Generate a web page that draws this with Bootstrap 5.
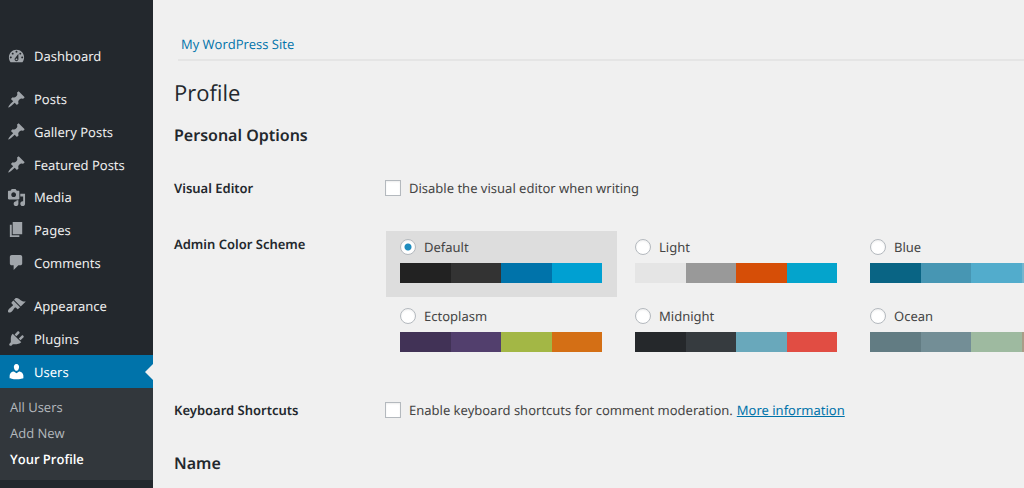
<!DOCTYPE html>
<html lang="en">
<head>
<meta charset="utf-8">
<meta name="viewport" content="width=device-width, initial-scale=1">
<title>Profile</title>
<link href="https://cdn.jsdelivr.net/npm/bootstrap@5.3.0/dist/css/bootstrap.min.css" rel="stylesheet">
<style>
body { font-family: "Noto Sans", "Open Sans", sans-serif; font-size: 13px; line-height: 20px; color: #444; background: #f0f0f0; overflow-x: hidden; text-rendering: geometricPrecision; }
a { color: #0073aa; }
/* Sidebar */
.sidebar { width: 153px; background: #23282d; padding-top: 39px; }
.menu-group { grid-auto-rows: 1fr; margin-bottom: 10px; }
.menu-one { height: 34px; }
.menu-three { height: 99px; }
.menu-six { height: 196px; }
.menu-link { color: #eee; padding-left: 7px; gap: 8px; }
.menu-link svg { width: 19px; height: 19px; fill: #a0a5aa; flex: none; }
.menu-link.current { background: #0073aa; color: #fff; }
.menu-link.current svg { fill: #fff; }
.menu-link.current::after { content: ""; margin-left: auto; border: 8px solid transparent; border-right-color: #f0f0f0; border-left: 0; }
.submenu { background: #32373c; padding: 6px 0 8px; font-family: "Open Sans", sans-serif; font-size: 13px; }
.submenu a { color: #b4b9be; line-height: 26px; padding-left: 10px; }
.submenu .current { color: #fff; font-weight: 600; }
/* Content */
.content { padding: 34px 0 0 21px; min-width: 0; }
.site-bar { margin-left: 4px; padding: 0 3px 5px; border-bottom: 2px solid #e5e5e5; font-family: "Open Sans", sans-serif; font-size: 13px; }
h1 { font-family: "Open Sans", sans-serif; font-size: 22px; line-height: 30px; font-weight: 400; color: #23282d; margin: 17px 0 0; }
h2 { font-size: 16px; line-height: 24px; font-weight: 600; color: #23282d; margin: 15px 0 0; }
.form-line + h2 { margin-top: 31px; }
.row-label { width: 211px; flex: none; font-weight: 600; color: #23282d; }
.form-line { margin-top: 31px; }
.scheme-line { margin: 33px 0 34px; }
.scheme-line .row-label { padding-top: 3px; }
.tick, .dot { appearance: none; width: 16px; height: 16px; flex: none; margin: 0; background: #fff; border: 1px solid #b4b9be; box-shadow: inset 0 1px 2px rgba(0,0,0,.07); }
.dot { border-radius: 50%; }
.dot:checked { background: radial-gradient(circle, #1e8cbe 3px, #fff 4px); }
.schemes { display: grid; grid-template-columns: repeat(3, 231px); gap: 3px 4px; padding-left: 1px; min-width: 0; overflow: hidden; }
.scheme { padding: 6px 15px 14px 14px; height: 66px; }
.scheme.selected { background: #ddd; }
.swatches { display: grid; grid-template-columns: repeat(4, 1fr); height: 20px; margin-top: 6px; }
</style>
</head>
<body>
<div class="d-flex min-vh-100">
<nav class="sidebar flex-shrink-0" aria-label="Main menu">
  <div class="menu-group menu-one d-grid">
    <a href="#" class="menu-link d-flex align-items-center text-decoration-none"><svg viewBox="0 0 20 20"><path fill-rule="evenodd" d="M3.76 16h12.48c1.1-1.37 1.76-3.11 1.76-5 0-4.42-3.58-8-8-8s-8 3.58-8 8c0 1.89.66 3.63 1.76 5zM10 4c.55 0 1 .45 1 1s-.45 1-1 1-1-.45-1-1 .45-1 1-1zM6 6c.55 0 1 .45 1 1s-.45 1-1 1-1-.45-1-1 .45-1 1-1zm8 0c.55 0 1 .45 1 1s-.45 1-1 1-1-.45-1-1 .45-1 1-1zm-5.37 5.55L12 7v6c0 1.1-.9 2-2 2s-2-.9-2-2c0-.57.24-1.08.63-1.45zM4 10c.55 0 1 .45 1 1s-.45 1-1 1-1-.45-1-1 .45-1 1-1zm12 0c.55 0 1 .45 1 1s-.45 1-1 1-1-.45-1-1 .45-1 1-1zm-5 3c0-.55-.45-1-1-1s-1 .45-1 1 .45 1 1 1 1-.45 1-1z"/></svg>Dashboard</a>
  </div>
  <div class="menu-group menu-six d-grid">
    <a href="#" class="menu-link d-flex align-items-center text-decoration-none"><svg viewBox="0 0 20 20"><path id="pin" d="M10.44 3.02l1.82-1.82 6.36 6.35-1.83 1.82c-1.05-.68-2.48-.57-3.41.36l-.75.75c-.92.93-1.04 2.35-.35 3.41l-1.83 1.82-2.41-2.41-2.8 2.79c-.42.42-3.38 2.71-3.8 2.29s1.86-3.39 2.28-3.81l2.79-2.79L4.1 9.36l1.83-1.82c1.05.69 2.48.57 3.4-.36l.75-.75c.93-.92 1.05-2.35.36-3.41z"/></svg>Posts</a>
    <a href="#" class="menu-link d-flex align-items-center text-decoration-none"><svg viewBox="0 0 20 20"><use href="#pin"/></svg>Gallery Posts</a>
    <a href="#" class="menu-link d-flex align-items-center text-decoration-none"><svg viewBox="0 0 20 20"><use href="#pin"/></svg>Featured Posts</a>
    <a href="#" class="menu-link d-flex align-items-center text-decoration-none"><svg viewBox="0 0 20 20"><path fill-rule="evenodd" d="M13 11V4c0-.55-.45-1-1-1h-1.67L9 1H5L3.67 3H2c-.55 0-1 .45-1 1v7c0 .55.45 1 1 1h10c.55 0 1-.45 1-1zM7 4.5c1.38 0 2.5 1.12 2.5 2.5S8.38 9.5 7 9.5 4.5 8.38 4.5 7 5.62 4.5 7 4.5zM14 6h5v10.5c0 1.38-1.12 2.5-2.5 2.5S14 17.88 14 16.5s1.12-2.5 2.5-2.5c.17 0 .34.02.5.05V9h-3V6zm-4 8.05V13h2v3.5c0 1.38-1.12 2.5-2.5 2.5S7 17.88 7 16.5 8.12 14 9.5 14c.17 0 .34.02.5.05z"/></svg>Media</a>
    <a href="#" class="menu-link d-flex align-items-center text-decoration-none"><svg viewBox="0 0 20 20"><path d="M6 15V2h10v13H6zm-1 1h8v2H3V5h2v11z"/></svg>Pages</a>
    <a href="#" class="menu-link d-flex align-items-center text-decoration-none"><svg viewBox="0 0 20 20"><path d="M5 2h9c1.1 0 2 .9 2 2v7c0 1.1-.9 2-2 2h-2l-5 5v-5H5c-1.1 0-2-.9-2-2V4c0-1.1.9-2 2-2z"/></svg>Comments</a>
  </div>
  <div class="menu-group menu-three d-grid mb-0">
    <a href="#" class="menu-link d-flex align-items-center text-decoration-none"><svg viewBox="0 0 20 20"><path d="M14.48 11.06L7.41 3.99l1.5-1.5c.5-.56 2.3-.47 3.51.32 1.21.8 1.43 1.28 2.91 2.1 1.18.64 2.45 1.26 4.45.85zm-.71.71L6.7 4.7 4.93 6.47c-.39.39-.39 1.02 0 1.41l1.06 1.06c.39.39.39 1.03 0 1.42-.6.6-1.43 1.11-2.21 1.69-.35.26-.7.53-1.01.84C1.43 14.23.4 16.08 1.4 17.07c.99 1 2.84-.03 4.18-1.36.31-.31.58-.66.85-1.02.57-.78 1.08-1.61 1.69-2.21.39-.39 1.02-.39 1.41 0l1.06 1.06c.39.39 1.02.39 1.41 0z"/></svg>Appearance</a>
    <a href="#" class="menu-link d-flex align-items-center text-decoration-none"><svg viewBox="0 0 20 20"><path d="M13.11 4.36L9.87 7.6 8 5.73l3.24-3.24c.35-.34 1.05-.2 1.56.32.52.51.66 1.21.31 1.55zm-8 1.77l.91-1.12 9.01 9.01-1.19.84c-.71.71-2.63 1.16-3.82 1.16H6.14L4.9 17.26c-.59.59-1.54.59-2.12 0-.59-.58-.59-1.53 0-2.12l1.24-1.24v-3.88c0-1.13.4-3.19 1.09-3.89zm7.26 3.97l3.24-3.24c.34-.35 1.04-.21 1.55.31.52.51.66 1.21.31 1.55l-3.24 3.25z"/></svg>Plugins</a>
    <a href="#" class="menu-link current d-flex align-items-center text-decoration-none"><svg viewBox="0 0 20 20"><path d="M10 9.25c-2.27 0-2.73-3.44-2.73-3.44C7 4.02 7.82 2 9.97 2c2.16 0 2.98 2.02 2.71 3.81 0 0-.41 3.44-2.68 3.44zm0 2.57L12.72 10c2.39 0 4.52 2.33 4.52 4.53v2.49s-3.65 1.13-7.24 1.13c-3.65 0-7.24-1.13-7.24-1.13v-2.49c0-2.25 1.94-4.48 4.47-4.48z"/></svg>Users</a>
  </div>
  <div class="submenu">
    <a href="#" class="d-block text-decoration-none">All Users</a>
    <a href="#" class="d-block text-decoration-none">Add New</a>
    <a href="#" class="d-block text-decoration-none current">Your Profile</a>
  </div>
</nav>
<main class="content flex-grow-1">
  <div class="site-bar"><a href="#" class="text-decoration-none">My WordPress Site</a></div>
  <h1>Profile</h1>
  <form>
    <h2>Personal Options</h2>
    <div class="form-line d-flex">
      <div class="row-label">Visual Editor</div>
      <div class="d-flex align-items-center gap-2"><input class="tick" type="checkbox" id="visual"><label for="visual">Disable the visual editor when writing</label></div>
    </div>
    <div class="scheme-line d-flex" role="radiogroup" aria-labelledby="scheme-label">
      <div class="row-label" id="scheme-label">Admin Color Scheme</div>
      <div class="schemes">
        <div class="scheme selected"><div class="d-flex align-items-center gap-2"><input class="dot" type="radio" name="scheme" id="s1" checked><label for="s1">Default</label></div><div class="swatches"><i style="background:#222"></i><i style="background:#333"></i><i style="background:#0073aa"></i><i style="background:#00a0d2"></i></div></div>
        <div class="scheme"><div class="d-flex align-items-center gap-2"><input class="dot" type="radio" name="scheme" id="s2"><label for="s2">Light</label></div><div class="swatches"><i style="background:#e5e5e5"></i><i style="background:#999"></i><i style="background:#d64e07"></i><i style="background:#04a4cc"></i></div></div>
        <div class="scheme"><div class="d-flex align-items-center gap-2"><input class="dot" type="radio" name="scheme" id="s3"><label for="s3">Blue</label></div><div class="swatches"><i style="background:#096484"></i><i style="background:#4796b3"></i><i style="background:#52accc"></i><i style="background:#74b6ce"></i></div></div>
        <div class="scheme"><div class="d-flex align-items-center gap-2"><input class="dot" type="radio" name="scheme" id="s4"><label for="s4">Ectoplasm</label></div><div class="swatches"><i style="background:#413256"></i><i style="background:#523f6d"></i><i style="background:#a3b745"></i><i style="background:#d46f15"></i></div></div>
        <div class="scheme"><div class="d-flex align-items-center gap-2"><input class="dot" type="radio" name="scheme" id="s5"><label for="s5">Midnight</label></div><div class="swatches"><i style="background:#25282b"></i><i style="background:#363b3f"></i><i style="background:#69a8bb"></i><i style="background:#e14d43"></i></div></div>
        <div class="scheme"><div class="d-flex align-items-center gap-2"><input class="dot" type="radio" name="scheme" id="s6"><label for="s6">Ocean</label></div><div class="swatches"><i style="background:#627c83"></i><i style="background:#738e96"></i><i style="background:#9ebaa0"></i><i style="background:#aa9d88"></i></div></div>
      </div>
    </div>
    <div class="form-line d-flex">
      <div class="row-label">Keyboard Shortcuts</div>
      <div class="d-flex align-items-center"><input class="tick me-2" type="checkbox" id="keys"><label class="me-1" for="keys">Enable keyboard shortcuts for comment moderation.</label><a href="#">More information</a></div>
    </div>
    <h2>Name</h2>
  </form>
</main>
</div>
<script src="https://cdn.jsdelivr.net/npm/bootstrap@5.3.0/dist/js/bootstrap.bundle.min.js"></script>
</body>
</html>
